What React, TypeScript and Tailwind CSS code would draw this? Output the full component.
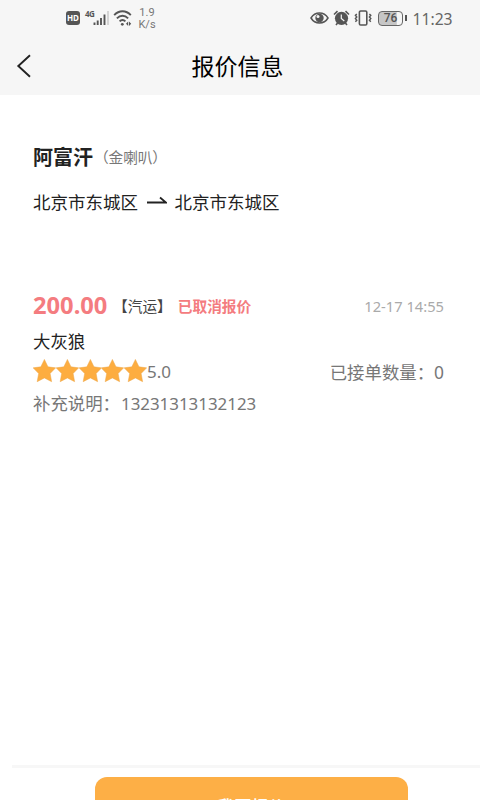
import type React from "react"

const Star: React.FC = () => (
    <svg className="h-6 w-[22.8px]" viewBox="0 0 23 24">
        <path d="M11.5 0.3 L15.1 7.8 L22.9 8.8 L17.3 14.5 L18.8 22.8 L11.5 19 L4.2 22.8 L5.7 14.5 L0.1 8.8 L7.9 7.8 Z" fill="#fdad40" stroke="#eda94d" strokeWidth="0.5" />
    </svg>
)

const StatusBar: React.FC = () => {
    return (
        <div className="flex h-9 items-center text-[#555]">
            <div className="ml-[66px] flex h-[14px] w-[14px] items-center justify-center rounded-[3px] bg-[#555] text-[8px] font-bold leading-none text-white">HD</div>
            <span className="ml-[5px] mb-2 w-[10px] text-[8px] font-bold leading-none tracking-[-0.5px]">4G</span>
            <svg className="-ml-[2px] h-4 w-4" viewBox="0 0 16 16">
                <path d="M1.5 15v-2.5M4.7 15v-4.5M8 15V8M11.5 15V4.5" stroke="#555" strokeWidth="1.9" />
                <path d="M15 15V1" stroke="#ccc" strokeWidth="1.6" />
            </svg>
            <svg className="ml-[4px] h-[18px] w-[20px]" viewBox="0 0 20 18" fill="none" stroke="#555" strokeWidth="1.9">
                <path d="M1.2 6.2C6 1 13 1 17.8 6.2M3.9 9.3C7.3 5.8 11.7 5.8 15.1 9.3M6.6 12.4C8.4 10.5 10.6 10.5 12.4 12.4" />
                <circle cx="9.3" cy="15.3" r="1.4" fill="#555" stroke="none" />
                <path d="M15.2 12.5L13 14.7L15.2 16.9ZM16 12.5L18.2 14.7L16 16.9Z" fill="#555" stroke="none" />
            </svg>
            <div className="ml-[4px] mt-px flex w-[20px] flex-col items-center font-[Roboto] text-[11px] leading-[12px] text-[#777]">
                <span>1.9</span>
                <span>K/s</span>
            </div>
            <svg className="ml-[153px] h-[14px] w-[19px]" viewBox="0 0 19 14">
                <path d="M1 7C5 .3 14 .3 18 7C14 13.7 5 13.7 1 7Z" fill="none" stroke="#555" strokeWidth="1.5" />
                <circle cx="9.5" cy="7" r="4.2" fill="#555" />
                <circle cx="8" cy="5.4" r="1.5" fill="#f6f6f6" />
            </svg>
            <svg className="ml-[4px] h-4 w-[17px]" viewBox="0 0 17 16">
                <circle cx="8.5" cy="8.3" r="6.6" fill="#555" />
                <path d="M8.3 4.6V8.5L11.3 11" fill="none" stroke="#f6f6f6" strokeWidth="1.2" />
                <path d="M1 4.5L4.5 1.2M16 4.5L12.5 1.2M4.6 13L3 15M12.4 13L14 15" stroke="#555" strokeWidth="1.6" />
            </svg>
            <svg className="ml-[4px] h-4 w-[18px]" viewBox="0 0 18 16" fill="none" stroke="#555">
                <rect x="5.4" y="1" width="7.4" height="14" rx="1.3" strokeWidth="1.6" />
                <path d="M2.8 4L1.4 5.4L2.8 7L1.4 8.6L2.8 10.2L1.4 11.8M15.4 4L16.8 5.4L15.4 7L16.8 8.6L15.4 10.2L16.8 11.8" strokeWidth="1.4" />
            </svg>
            <div className="ml-[6px] flex h-[15px] w-[25px] items-center justify-center rounded-[4px] border-[1.5px] border-[#666] bg-linear-to-r from-[#c6c6c6] from-75% to-[#f6f6f6] to-80% font-[Roboto] text-[12px] font-medium leading-none">76</div>
            <div className="ml-[2px] h-[6px] w-[1.5px] bg-[#555]" />
            <span className="ml-[6px] mt-[2px] text-[15.7px] leading-5 text-[#666]">11:23</span>
        </div>
    )
}

const App: React.FC = () => {
    return (
        <div className="flex h-[800px] w-[480px] flex-col overflow-hidden bg-white font-['Noto_Sans','Noto_Sans_CJK_SC',sans-serif]">
            <header className="h-[95px] shrink-0 bg-[#f6f6f6]">
                <StatusBar />
                <div className="flex h-[59px] items-center">
                    <svg className="ml-4 h-6 w-4" viewBox="0 0 16 24" fill="none" stroke="#222" strokeWidth="1.9">
                        <path d="M14 1.2L2.3 12L14 22.8" />
                    </svg>
                    <h1 className="ml-[159.5px] text-[23px] font-normal leading-8 text-black">报价信息</h1>
                </div>
            </header>

            <main className="flex-1 pl-[33px] pr-9 pt-12">
                <div className="flex h-[30px] items-center">
                    <h2 className="text-[20px] font-bold leading-[30px] text-[#222]">阿富汗</h2>
                    <span className="mb-[2px] ml-px text-[14.7px] leading-[28px] tracking-[-0.1px] text-[#777]">（金喇叭）</span>
                </div>
                <div className="mt-4 flex h-[26px] items-center text-[17.5px] leading-[26px] text-[#222]">
                    <span>北京市东城区</span>
                    <svg className="ml-[8.5px] mr-2 h-3 w-5" viewBox="0 0 20 12" fill="none" stroke="#222" strokeWidth="1.8">
                        <path d="M0 6.5H19L13 1.5" />
                    </svg>
                    <span>北京市东城区</span>
                </div>

                <section className="mt-[75px]">
                    <div className="flex h-8 items-center text-[14.7px] leading-8">
                        <span className="mb-[2px] w-[80px] text-[23.7px] font-bold text-[#f47c80]">200.00</span>
                        <span className="text-[#444]">【汽运】</span>
                        <span className="ml-[6px] font-bold text-[#f47c80]">已取消报价</span>
                        <span className="ml-auto text-[#aaa]">12-17 14:55</span>
                    </div>
                    <p className="mt-[6px] h-[26px] text-[17.4px] leading-[26px] text-[#222]">大灰狼</p>
                    <div className="mt-1 flex h-[26px] items-center text-[17px] leading-[26px] text-[#777]">
                        <Star />
                        <Star />
                        <Star />
                        <Star />
                        <Star />
                        <span className="mt-[2px]">5.0</span>
                        <span className="ml-auto mt-[2px] text-[17.4px]">已接单数量：0</span>
                    </div>
                    <p className="mt-[6px] h-[26px] text-[17.4px] leading-[26px] text-[#777]">
                        补充说明：<span className="ml-px text-[16.9px]">13231313132123</span>
                    </p>
                </section>
            </main>

            <footer className="ml-3 h-[35px] shrink-0 border-t-[3px] border-[#f7f7f7] pl-[83px] pt-[9px]">
                <button className="flex h-14 w-[313px] items-start justify-center rounded-[12px] bg-[#fdaf46] pt-[18px] text-[17px] font-medium leading-6 text-white">
                    我要报价
                </button>
            </footer>
        </div>
    )
}

export default App
